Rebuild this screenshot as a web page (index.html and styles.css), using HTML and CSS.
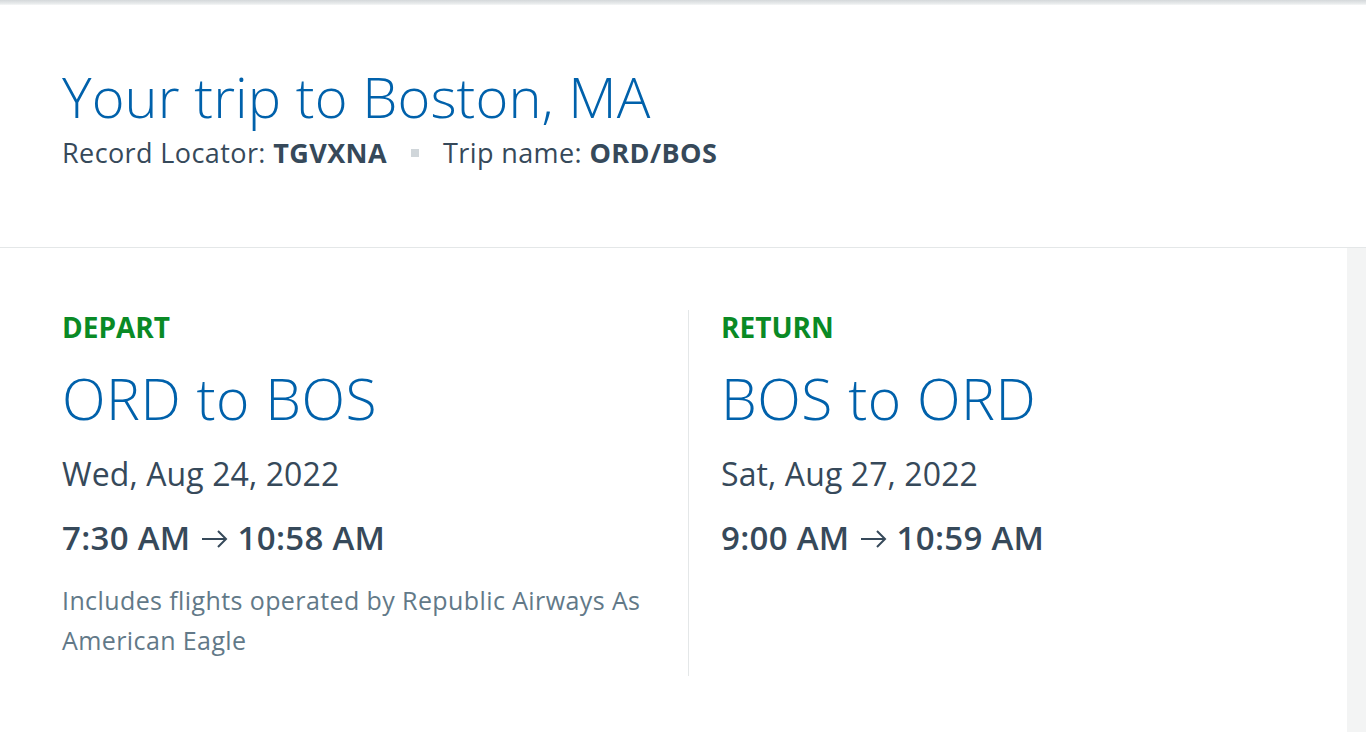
FILE: index.html
```html
<!DOCTYPE html>
<html>
<head>
<meta charset="utf-8">
<link rel="stylesheet" href="styles.css">
</head>
<body>
<div class="topshadow"></div>
<header class="header">
  <h1 class="title">Your trip to Boston, MA</h1>
  <div class="meta">
    <span>Record Locator: <b>TGVXNA</b></span>
    <span class="dot"></span>
    <span>Trip name: <b>ORD/BOS</b></span>
  </div>
</header>
<main class="main">
  <section class="panel">
    <div class="col col-left">
      <div class="label">DEPART</div>
      <div class="route">ORD to BOS</div>
      <div class="date">Wed, Aug 24, 2022</div>
      <div class="times">7:30 AM<svg class="arrow" width="27" height="20" viewBox="0 0 27 20"><path d="M1 10H25M17 2L25 10L17 18" fill="none" stroke="#36495a" stroke-width="2"/></svg>10:58 AM</div>
      <p class="note">Includes flights operated by Republic Airways As American Eagle</p>
    </div>
    <div class="col col-right">
      <div class="label">RETURN</div>
      <div class="route">BOS to ORD</div>
      <div class="date">Sat, Aug 27, 2022</div>
      <div class="times">9:00 AM<svg class="arrow" width="27" height="20" viewBox="0 0 27 20"><path d="M1 10H25M17 2L25 10L17 18" fill="none" stroke="#36495a" stroke-width="2"/></svg>10:59 AM</div>
    </div>
  </section>
  <aside class="strip"></aside>
</main>
</body>
</html>
```
FILE: styles.css
```css
* { box-sizing: border-box; }
html, body { margin: 0; padding: 0; background: #fff; }
body {
  font-family: "Open Sans", "Noto Sans", sans-serif;
  color: #36495a;
  height: 732px;
  overflow: hidden;
}
.topshadow {
  height: 5px;
  background: linear-gradient(#d4d8da, #e8ebec 70%, #f6f7f7);
}
.header {
  height: 243px;
  padding: 58px 0 0 62px;
  border-bottom: 1px solid #e4e7e8;
}
.title {
  margin: 0;
  font-weight: 300;
  font-size: 56px;
  line-height: 66px;
  color: #0061ab;
  letter-spacing: 0.1px;
}
.meta {
  display: flex;
  align-items: center;
  font-size: 27px;
  line-height: 34px;
  margin-top: 7px;
  letter-spacing: 0.4px;
  color: #36495a;
}
.meta b { font-weight: 700; }
.dot {
  width: 8px;
  height: 8px;
  margin: 0 24px;
  background: #d0d6da;
}
.main {
  display: flex;
  height: 484px;
}
.panel {
  flex: 1;
  display: flex;
  padding-top: 62px;
}
.strip {
  width: 19px;
  background: #f3f4f4;
}
.col-left {
  width: 689px;
  padding-left: 62px;
  padding-right: 40px;
  border-right: 1px solid #e4e7e8;
  height: 366px;
}
.col-right {
  padding-left: 32px;
}
.label {
  font-size: 28px;
  font-weight: 700;
  color: #0a8a25;
  line-height: 34px;
}
.route {
  font-size: 57px;
  font-weight: 300;
  color: #0061ab;
  line-height: 74px;
  margin-top: 17px;
  letter-spacing: 0.5px;
}
.date {
  font-size: 32px;
  line-height: 44px;
  margin-top: 17px;
  letter-spacing: 0.1px;
}
.times {
  display: flex;
  align-items: center;
  font-size: 33px;
  font-weight: 600;
  line-height: 40px;
  margin-top: 22px;
  letter-spacing: 0.3px;
}
.arrow { margin: 2px 10px 0 10px; }
.note {
  margin: 22px 0 0;
  font-size: 25px;
  line-height: 40px;
  color: #627988;
  letter-spacing: 0.4px;
}
```
